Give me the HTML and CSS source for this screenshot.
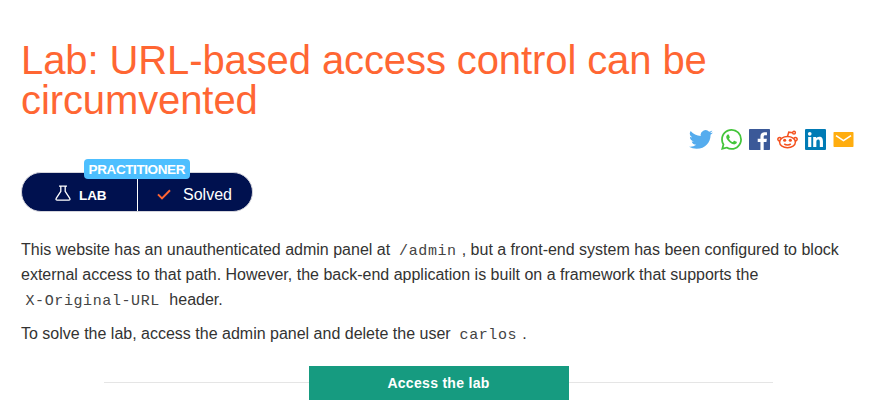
FILE: index.html
```html
<!DOCTYPE html>
<html lang="en">
<head>
<meta charset="utf-8">
<title>Lab: URL-based access control can be circumvented</title>
<link rel="stylesheet" href="styles.css">
</head>
<body>
<main class="page">
  <h1 class="title">Lab: URL-based access control can be circumvented</h1>
  <div class="share">
    <svg class="twitter" viewBox="0 0 24 24" preserveAspectRatio="none"><path fill="#55acee" d="M23.95 4.57a10 10 0 0 1-2.82.77 4.96 4.96 0 0 0 2.16-2.72c-.95.55-2 .96-3.13 1.18a4.92 4.92 0 0 0-8.38 4.48C7.69 8.1 4.07 6.13 1.64 3.16a4.92 4.92 0 0 0 1.52 6.57 4.9 4.9 0 0 1-2.23-.61v.06a4.92 4.92 0 0 0 3.95 4.83 5 5 0 0 1-2.21.08 4.94 4.94 0 0 0 4.6 3.42A9.87 9.87 0 0 1 0 19.54a13.99 13.99 0 0 0 7.55 2.21c9.05 0 14-7.5 14-13.98 0-.21 0-.42-.02-.63a9.94 9.94 0 0 0 2.42-2.57z"/></svg>
    <svg class="whatsapp" viewBox="0 0 24 24"><path fill="#43c53a" d="M17.472 14.382c-.297-.149-1.758-.867-2.03-.967-.273-.099-.471-.148-.67.15-.197.297-.767.966-.94 1.164-.173.199-.347.223-.644.075-.297-.15-1.255-.463-2.39-1.475-.883-.788-1.48-1.761-1.653-2.059-.173-.297-.018-.458.13-.606.134-.133.298-.347.446-.52.149-.174.198-.298.298-.497.099-.198.05-.371-.025-.52-.075-.149-.669-1.612-.916-2.207-.242-.579-.487-.5-.669-.51-.173-.008-.371-.01-.57-.01-.198 0-.52.074-.792.372-.272.297-1.04 1.016-1.04 2.479 0 1.462 1.065 2.875 1.213 3.074.149.198 2.096 3.2 5.077 4.487.709.306 1.262.489 1.694.625.712.227 1.36.195 1.871.118.571-.085 1.758-.719 2.006-1.413.248-.694.248-1.289.173-1.413-.074-.124-.272-.198-.57-.347m-5.421 7.403h-.004a9.87 9.87 0 01-5.031-1.378l-.361-.214-3.741.982.998-3.648-.235-.374a9.86 9.86 0 01-1.51-5.26c.001-5.45 4.436-9.884 9.888-9.884 2.64 0 5.122 1.03 6.988 2.898a9.825 9.825 0 012.893 6.994c-.003 5.45-4.437 9.884-9.885 9.884m8.413-18.297A11.815 11.815 0 0012.05 0C5.495 0 .16 5.335.157 11.892c0 2.096.547 4.142 1.588 5.945L.057 24l6.305-1.654a11.882 11.882 0 005.683 1.448h.005c6.554 0 11.89-5.335 11.893-11.893a11.821 11.821 0 00-3.48-8.413z"/></svg>
    <svg class="facebook" viewBox="0 0 20 20"><rect width="20" height="20" rx=".6" fill="#3b5998"/><path fill="#fff" d="M14 20v-7.700h2.600l.4-3h-3V7.400c0-.9.3-1.500 1.500-1.500h1.600V3.200c-.3 0-1.200-.1-2.300-.1-2.400 0-3.900 1.400-3.900 4v2.200H8.300v3h2.600V20z"/></svg>
    <svg class="reddit" viewBox="0 0 20 18" fill="none" stroke="#f4511e" stroke-width="1.4"><ellipse cx="10" cy="11.500" rx="7.500" ry="5.300"/><path d="M10 6.200 11.200 2 15 2.500M3.900 8.200C2.700 6.200.4 7.600.9 9.200c.2.8.9 1.300 1.900 1.500M16.100 8.200c1.200-2 3.500-.6 3 1-.2.8-.9 1.300-1.900 1.500M6.900 13.200c1.600 1.500 4.600 1.500 6.200 0"/><circle cx="16.200" cy="2.500" r="1.300"/><g fill="#f4511e" stroke="none"><circle cx="7.300" cy="9.700" r="1.500"/><circle cx="12.700" cy="9.700" r="1.500"/></g></svg>
    <svg class="linkedin" viewBox="0 0 20 20"><rect width="20" height="20" rx="1" fill="#007bb5"/><g fill="#fff"><circle cx="4.500" cy="4.600" r="1.750"/><path d="M3 7.600h3v9.500H3zM7.800 7.600h2.800v1.300c.4-.8 1.400-1.600 2.900-1.600 3 0 3.600 2 3.600 4.600v5.200h-3v-4.600c0-1.100 0-2.600-1.500-2.600s-1.800 1.200-1.800 2.500v4.700h-3z"/></g></svg>
    <svg class="mail" viewBox="0 0 20 15"><rect width="20" height="15" rx=".7" fill="#ffad0f"/><path fill="none" stroke="#fff" stroke-width="1.600" d="m2.500 3.600 7.500 5 7.500-5"/></svg>
  </div>
  <div class="status">
    <div class="level">PRACTITIONER</div>
    <div class="lab"><svg class="flask" viewBox="0 0 16 17"><path fill="none" stroke="#fff" stroke-width="1.300" stroke-linejoin="round" d="M4 1.200h8M5.800 1.200v5.200L1.200 13.400Q.5 15.200 2.200 15.200h11.600q1.700 0 1-1.800L10.200 6.400V1.200"/></svg><span>LAB</span></div>
    <div class="solved"><svg class="check" viewBox="0 0 14 11"><path fill="none" stroke="#ff6633" stroke-width="2" d="m1 5.400 4 4L13 1.200"/></svg><span>Solved</span></div>
  </div>
  <p>This website has an unauthenticated admin panel at <code>/admin</code>, but a front-end system has been configured to block external access to that path. However, the back-end application is built on a framework that supports the <code>X-Original-URL</code> header.</p>
  <p>To solve the lab, access the admin panel and delete the user <code>carlos</code>.</p>
  <div class="access"><a class="button">Access the lab</a></div>
</main>
</body>
</html>
```
FILE: styles.css
```css
body {
  margin: 0;
  background: #fff;
  color: #333332;
  font: 16px/25px "Liberation Sans", Arial, sans-serif;
}
.page {
  padding: 40px 18px 0 21px;
}
.title {
  margin: 0;
  color: #ff6633;
  font-size: 40px;
  font-weight: 400;
  line-height: 40px;
  letter-spacing: -0.1px;
}
.share {
  display: flex;
  justify-content: flex-end;
  align-items: center;
  height: 21px;
  margin-top: 9px;
}
.share svg {
  flex: none;
  display: block;
}
.twitter { width: 24px; height: 23px; margin-right: 8px; }
.whatsapp { width: 21px; height: 21px; margin-right: 7px; }
.facebook { width: 21px; height: 21px; margin-right: 7px; }
.reddit { width: 21px; height: 19px; margin-right: 7px; }
.linkedin { width: 21px; height: 21px; margin-right: 7px; }
.mail { width: 21px; height: 15px; }
.status {
  position: relative;
  display: flex;
  box-sizing: border-box;
  width: 232px;
  height: 40px;
  margin-top: 22px;
  border: 1px solid #d5d5dc;
  border-radius: 20px;
  background: #00114f;
  color: #fff;
}
.level {
  position: absolute;
  top: -14px;
  left: 62px;
  width: 106px;
  height: 20px;
  border-radius: 4px;
  background: #4dbfff;
  font-size: 13.5px;
  font-weight: 700;
  line-height: 21px;
  letter-spacing: -0.4px;
  text-indent: -0.4px;
  text-align: center;
}
.lab,
.solved {
  display: flex;
  align-items: center;
}
.lab {
  box-sizing: border-box;
  width: 116px;
  padding-left: 33px;
  border-right: 1px solid #fff;
  font-size: 13.5px;
  font-weight: 700;
  letter-spacing: -0.1px;
}
.lab span,
.solved span {
  position: relative;
  top: 2px;
}
.lab span { top: 3px; }
.flask { width: 16px; height: 17px; margin: 2px 8px 0 0; }
.solved { padding-left: 19px; }
.check { width: 14px; height: 11px; margin: 5px 12px 0 0; }
p {
  margin: 0 0 9px;
}
.status + p {
  margin-top: 25px;
}
code {
  padding: 0 5px 0 4.5px;
  color: #444;
  font: 15px/1 "Liberation Mono", "Courier New", monospace;
  letter-spacing: 0.6px;
  white-space: nowrap;
}
.access {
  display: flex;
  align-items: center;
  width: 669px;
  margin: 20px 0 0 83px;
}
.access::before,
.access::after {
  content: "";
  flex: 1;
  height: 1px;
  margin-bottom: 1px;
  background: #e5e5e5;
}
.button {
  width: 260px;
  height: 34px;
  background: #169b80;
  color: #fff;
  font-size: 14px;
  font-weight: 700;
  line-height: 35px;
  letter-spacing: 0.3px;
  text-align: center;
}
```
